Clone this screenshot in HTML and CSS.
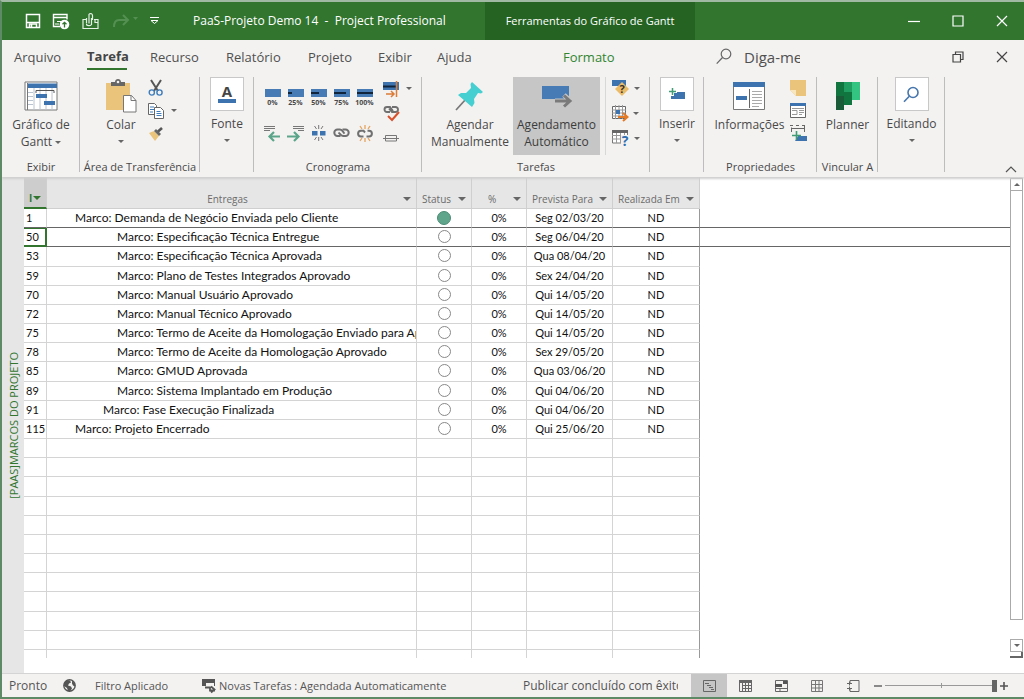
FILE: index.html
```html
<!DOCTYPE html>
<html lang="pt-BR">
<head>
<meta charset="utf-8">
<title>PaaS-Projeto Demo 14 - Project Professional</title>
<meta name="viewport" content="width=device-width, initial-scale=1">
<link rel="stylesheet" href="styles.css">
</head>
<body>
<div class="window">
<header class="titlebar">
  <div class="quick">
    <button aria-label="Salvar"><svg width="16" height="16" viewBox="0 0 16 16" fill="none" stroke="#fff" stroke-width="1.5"><path d="M1.5 1.5h13v13h-13zM1.5 9.5h13"/><path d="M4.5 14.500v-3.500h7v3.500M6.500 11v3" /></svg></button>
    <button aria-label="Publicar"><svg width="17" height="17" viewBox="0 0 17 17" fill="none" stroke="#fff"><path d="M7 13.500H.5V1.500h13.500v5M1 4.500h13" stroke-width="1.400"/><path d="M4 8.500h4M2 11h4"/><circle cx="11.500" cy="11.500" r="4.800" fill="#fff" stroke="none"/><path d="M11.500 14.500v-5M9.500 11.300l2-2 2 2" stroke="#31752f" stroke-width="1.300"/></svg></button>
    <button aria-label="Anexar"><svg width="18" height="17" viewBox="0 0 18 17" fill="none" stroke="#e5f1e4" stroke-width="1.200"><path d="M4 6.500H1v9h15v-9h-4M13 6.500v3h3"/><path d="M4.500 5v5.500M7 1v9.500M9.500 5v7M4.500 11c0 2 4.500 2.500 5 0M7 1c2-1 3.500 0 3.500 1.500V7"/></svg></button>
    <button class="faded" aria-label="Refazer"><svg width="26" height="14" viewBox="0 0 26 14" fill="none" stroke="#549051" stroke-width="2"><path d="M2 13c0-4 1-7 5-7h8M11 1l5 5-5 5"/><path d="M21 3h5l-2.500 3z" fill="#549051" stroke="none"/></svg></button>
    <button aria-label="Personalizar"><svg width="9" height="8" viewBox="0 0 9 8" fill="none" stroke="#fff"><path d="M0 .5h9M1 3.500l3.500 3 3.500-3z"/></svg></button>
  </div>
  <h1>PaaS-Projeto Demo 14&nbsp; -&nbsp; Project Professional</h1>
  <div class="context">Ferramentas do Gráfico de Gantt</div>
  <div class="controls">
    <button aria-label="Minimizar"><svg width="12" height="12" viewBox="0 0 12 12"><path d="M0 6.500h12" stroke="#fff" stroke-width="1.200"/></svg></button>
    <button aria-label="Maximizar"><svg width="12" height="12" viewBox="0 0 12 12"><path d="M1 1h10v10H1z" stroke="#fff" stroke-width="1.200" fill="none"/></svg></button>
    <button aria-label="Fechar"><svg width="12" height="12" viewBox="0 0 12 12"><path d="M1 1l10 10M11 1L1 11" stroke="#fff" stroke-width="1.200"/></svg></button>
  </div>
</header>

<nav class="tabs">
  <a href="#" class="tab-file">Arquivo</a>
  <a href="#" class="tab-task active">Tarefa</a>
  <a href="#" class="tab-resource">Recurso</a>
  <a href="#" class="tab-report">Relatório</a>
  <a href="#" class="tab-project">Projeto</a>
  <a href="#" class="tab-view">Exibir</a>
  <a href="#" class="tab-help">Ajuda</a>
  <a href="#" class="tab-format">Formato</a>
  <label class="tellme"><svg width="16" height="17" viewBox="0 0 16 17" fill="none" stroke="#666" stroke-width="1.200"><circle cx="10" cy="6" r="4.800"/><path d="M6.500 9.500L.7 15.700"/></svg><span>Diga-me</span></label>
  <div class="controls dark">
    <button aria-label="Restaurar"><svg width="12" height="12" viewBox="0 0 12 12" fill="none" stroke="#444" stroke-width="1.200"><path d="M1 3.500h7.500V11H1zM3.500 3.500V1H11v7.500H8.500"/></svg></button>
    <button aria-label="Fechar projeto"><svg width="12" height="12" viewBox="0 0 12 12"><path d="M1 1l10 10M11 1L1 11" stroke="#444" stroke-width="1.200"/></svg></button>
  </div>
</nav>

<section class="ribbon">
  <div class="group g-view">
    <div class="tools"><button class="big"><span class="ico"><svg width="34" height="30" viewBox="0 0 34 30"><path d="M1 1h32v28H1z" fill="#fff" stroke="#777"/><path d="M3 2.500h30V7H3z" fill="#3d73ae"/><path d="M4 11.500h5M4 15.500h5M4 19.500h5M4 23.500h5M10 7v22M16 7v22M22 7v22M28 7v22" stroke="#b9c4d0"/><path d="M3.500 2v27" stroke="#777"/><path d="M12 12v-2.500h18V12" fill="none" stroke="#555"/><path d="M12 13h11v4H12zM20 20h11v4H20z" fill="#3d73ae"/></svg></span><span>Gráfico de<br>Gantt <i class="caret"></i></span></button></div>
    <h2>Exibir</h2>
  </div>
  <div class="group g-clip">
    <div class="tools">
      <button class="big"><span class="ico"><svg width="32" height="34" viewBox="0 0 32 34"><path d="M1 4h24v27H1z" fill="#ebc47c"/><path d="M6 3h4c0-4 6-4 6 0h4v4H6z" fill="#666"/><circle cx="13" cy="3" r="1.300" fill="#f3f2f1"/><path d="M18.500 16.500h8l4.500 5v11.500H18.500z" fill="#fff" stroke="#777"/><path d="M26 16.500v5h5" fill="none" stroke="#777"/></svg></span><span>Colar</span><i class="caret"></i></button>
      <div class="stack">
        <button aria-label="Recortar"><svg width="16" height="16" viewBox="0 0 16 16" fill="none"><path d="M3 0l7 11M13 0L6 11" stroke="#555" stroke-width="2"/><circle cx="3.800" cy="12.500" r="2.600" stroke="#3f7dbb" stroke-width="1.400"/><circle cx="11.500" cy="12.500" r="2.600" stroke="#3f7dbb" stroke-width="1.400"/></svg></button>
        <button aria-label="Copiar"><svg width="16" height="16" viewBox="0 0 16 16" fill="#fff" stroke="#666"><path d="M.5.5h6l2 2v9h-8z"/><path d="M2 4h4M2 6.500h4M2 9h3" stroke="#3f7dbb"/><path d="M6.500 4.500h6l3 3v8h-9z"/><path d="M8.500 8.500h4M8.500 10.500h5M8.500 12.500h5" stroke="#3f7dbb"/></svg><i class="caret"></i></button>
        <button aria-label="Pincel de Formatação"><svg width="16" height="14" viewBox="0 0 16 14"><path d="M1 6l5-2 5 5-4 5z" fill="#ebc47c"/><path d="M6 4l2-2 5 5-2 2z" fill="#666"/><path d="M10 4.500L14 1" stroke="#555" stroke-width="2.600"/></svg></button>
      </div>
    </div>
    <h2>Área de Transferência</h2>
  </div>
  <div class="group g-font">
    <div class="tools"><button class="big boxed"><span class="box"><svg width="18" height="22" viewBox="0 0 18 22"><text x="9" y="14" text-anchor="middle" class="glyph-a">A</text><path d="M0 16h18v4H0z" fill="#3d73ae"/></svg></span><span>Fonte</span><i class="caret"></i></button></div>
  </div>
  <div class="group g-sched">
    <div class="tools">
      <div class="progress-grid">
        <button><i class="bar"><i class="p0"></i></i>0%</button>
        <button><i class="bar"><i class="p25"></i></i>25%</button>
        <button><i class="bar"><i class="p50"></i></i>50%</button>
        <button><i class="bar"><i class="p75"></i></i>75%</button>
        <button><i class="bar"><i class="p100"></i></i>100%</button>
        <button aria-label="Recuar"><svg width="17" height="17" viewBox="0 0 17 17" fill="none"><path d="M0 1.500h11M0 3.500h11M0 5.500h6" stroke="#777"/><path d="M16 11.500H6M10 7l-4.500 4.500L10 16" stroke="#5ba58a" stroke-width="2.200"/></svg></button>
        <button aria-label="Avançar"><svg width="17" height="17" viewBox="0 0 17 17" fill="none"><path d="M6 1.500h11M6 3.500h11M11 5.500h6" stroke="#777"/><path d="M0 11.500h11M7 7l4.500 4.500L7 16" stroke="#5ba58a" stroke-width="2.200"/></svg></button>
        <button aria-label="Dividir Tarefa"><svg width="16" height="16" viewBox="0 0 16 16"><path d="M1 6h5.500v4.500H1zM9 6h5.500v4.500H9z" fill="#3d73ae"/><path d="M7.700 0v4M7.700 12v4M3.500 1l2 3M12 1l-2 3M3.500 15l2-3M12 15l-2-3" stroke="#777"/></svg></button>
        <button aria-label="Vincular"><svg width="17" height="12" viewBox="0 0 17 12" fill="none" stroke="#707070" stroke-width="2"><path d="M7.500 9H4.500a3.200 3.200 0 0 1 0-6.400H7c2.500 0 3 2.500 4.500 4"/><path d="M9.500 2.600h3a3.200 3.200 0 0 1 0 6.400H10C7.500 9 7 6.500 5.500 5.500"/></svg></button>
        <button aria-label="Desvincular"><svg width="16" height="17" viewBox="0 0 16 17" fill="none"><path d="M6.500 11.500H4a2.900 2.900 0 0 1 0-5.800h2.500L8 7.500M9.500 11.500H12a2.900 2.900 0 0 0 0-5.800h-1.500" stroke="#707070" stroke-width="2"/><path d="M8 0v4M8 13v4M3 1l2 3M13 1l-2 3M3 16l2-3M13 16l-2-3" stroke="#e5a45c" stroke-width="1.300"/></svg></button>
      </div>
      <div class="stack">
        <button aria-label="Atualizar"><svg width="16" height="16" viewBox="0 0 16 16" fill="none"><path d="M0 1h16v8H0z" fill="#3d73ae"/><path d="M0 5.500h13" stroke="#10243b" stroke-width="2"/><path d="M13.500 0v16M3 13h8M8 10l3 3-3 3" stroke="#dc7b35" stroke-width="1.500"/></svg><i class="caret"></i></button>
        <button aria-label="Respeitar Vínculos"><svg width="17" height="17" viewBox="0 0 17 17" fill="none"><path d="M7 7H4a2.500 2.500 0 0 1 0-5h3l3 4M9 2h3.500a2.500 2.500 0 0 1 0 5H9L6 3.500" stroke="#707070" stroke-width="1.900"/><path d="M5 11l4 4 7-8" stroke="#d9512c" stroke-width="2"/></svg></button>
        <button aria-label="Inativar"><svg width="16" height="7" viewBox="0 0 16 7" fill="none" stroke="#777"><path d="M2.500.5h11v5.500h-11zM0 3.500h16"/></svg></button>
      </div>
    </div>
    <h2>Cronograma</h2>
  </div>
  <div class="group g-tasks">
    <div class="tools">
      <button class="big manual"><span class="ico"><svg width="30" height="30" viewBox="0 0 30 30"><path d="M1 29l10-11" stroke="#777" stroke-width="1.700"/><path d="M17 1l11 10-2 1.500-3-.5-4 6 .5 4-2.500 4L3 14l3-2h5l5-5-.5-4z" fill="#45cfd0"/></svg></span><span>Agendar<br>Manualmente</span></button>
      <button class="big auto" aria-pressed="true"><span class="ico"><svg width="32" height="26" viewBox="0 0 32 26"><path d="M1 3h27v13H1z" fill="#477bb5"/><path d="M14 18h15M23 12l6.500 6L23 24" fill="none" stroke="#c6c6c6" stroke-width="5"/><path d="M14 18h15M23 12.500l6 5.500-6 5.500" fill="none" stroke="#7a7a7a" stroke-width="3"/></svg></span><span>Agendamento<br>Automático</span></button>
      <div class="stack divided">
        <button aria-label="Inspecionar"><svg width="18" height="17" viewBox="0 0 18 17"><path d="M0 0h14v6H0z" fill="#3d73ae"/><path d="M10 2l7 7-7 7-7-7z" fill="#ebbc67"/><text x="10" y="13" text-anchor="middle" class="q">?</text></svg><i class="caret"></i></button>
        <button aria-label="Mover"><svg width="17" height="17" viewBox="0 0 17 17" fill="none"><path d="M.5 1.500h13v12H.5z" fill="#fff" stroke="#666"/><path d="M3.500 0v14M7 0v14M10.500 0v14M0 5h14M0 8h14M0 11h14" stroke="#999"/><path d="M4 5h4v4H4z" fill="#3d73ae"/><path d="M6 12h9M11 8l4.500 4-4.500 4" stroke="#e47a25" stroke-width="2"/></svg><i class="caret"></i></button>
        <button aria-label="Modo"><svg width="18" height="17" viewBox="0 0 18 17"><path d="M.5 1h15v12H.5z" fill="#fff" stroke="#777"/><path d="M4.500 1v12M8.500 1v12M12.500 1v12M0 5.500h15M0 9h15" stroke="#999"/><path d="M0 0h16v3H0z" fill="#666"/><path d="M9 5h8v12H9z" fill="#f3f2f1"/><text x="13" y="16" text-anchor="middle" class="q blue">?</text></svg><i class="caret"></i></button>
      </div>
    </div>
    <h2>Tarefas</h2>
  </div>
  <div class="group g-insert">
    <div class="tools"><button class="big boxed"><span class="box"><svg width="18" height="14" viewBox="0 0 18 14"><path d="M3 5h14v7H3z" fill="#3d73ae"/><path d="M4.500 0v9M0 4.500h9" stroke="#fff" stroke-width="3"/><path d="M4.500 1v7M1 4.500h7" stroke="#3f9c74" stroke-width="1.500"/></svg></span><span>Inserir</span><i class="caret"></i></button></div>
  </div>
  <div class="group g-props">
    <div class="tools">
      <button class="big"><span class="ico"><svg width="32" height="28" viewBox="0 0 32 28"><path d="M.5.5h31v27H.5z" fill="#fff" stroke="#777"/><path d="M0 0h32v5H0z" fill="#3d73ae"/><path d="M3 14h11v4H3z" fill="#3d73ae"/><path d="M16.500 7v19" stroke="#666"/><path d="M19 9.500h10M19 12.500h10M19 15.500h10M19 18.500h10M19 21.500h10M19 24.500h7" stroke="#aaa"/></svg></span><span>Informações</span></button>
      <div class="stack">
        <button aria-label="Anotações"><svg width="16" height="16" viewBox="0 0 16 16"><path d="M0 0h16v16H6L0 10z" fill="#ebc47c"/><path d="M0 10h6v6z" fill="#f8e6bf"/></svg></button>
        <button aria-label="Detalhes"><svg width="16" height="15" viewBox="0 0 16 15"><path d="M.5.5h15v14H.5z" fill="#fff" stroke="#666"/><path d="M0 0h16v3H0z" fill="#3d73ae"/><path d="M2 5.500h12M2 7.500h5v4H2M9 7.500h5M9 9.500h5M9 11.500h3" fill="none" stroke="#999"/></svg></button>
        <button aria-label="Adicionar à Linha do Tempo"><svg width="17" height="17" viewBox="0 0 17 17" fill="none"><path d="M0 .5h3M6 .5h3M12 .5h3M1.500 7V2.500M1.500 3.500h13M14.500 1v6" stroke="#666"/><path d="M8 11h9v5H5z" fill="#3d73ae"/><path d="M6.500 6v9M2 10.500h9" stroke="#3f9c74" stroke-width="1.600"/></svg></button>
      </div>
    </div>
    <h2>Propriedades</h2>
  </div>
  <div class="group g-planner">
    <div class="tools"><button class="big"><span class="ico"><svg width="24" height="28" viewBox="0 0 24 28"><path d="M0 0h16v23H8v5H0z" fill="#10753e"/><path d="M8 0h8v10H8z" fill="#209d61"/><path d="M16 0h8v18h-8z" fill="#33c481"/><path d="M0 14h8v14H0z" fill="#1b5c38"/></svg></span><span>Planner</span></button></div>
    <h2>Vincular A</h2>
  </div>
  <div class="group g-edit">
    <div class="tools"><button class="big boxed"><span class="box"><svg width="17" height="17" viewBox="0 0 17 17" fill="none" stroke="#4676ac" stroke-width="1.600"><circle cx="10" cy="6.500" r="5"/><path d="M6.300 10.300L1 15.700"/></svg></span><span>Editando</span><i class="caret"></i></button></div>
  </div>
  <button class="collapse" aria-label="Recolher faixa de opções"><svg width="12" height="7" viewBox="0 0 12 7"><path d="M1 6l5-5 5 5" fill="none" stroke="#555" stroke-width="1.200"/></svg></button>
</section>

<main class="work">
  <aside class="viewname"><span>[PAAS]MARCOS DO PROJETO</span></aside>
  <div class="sheet">
  <table>
    <colgroup><col class="c-id"><col class="c-name"><col class="c-status"><col class="c-pct"><col class="c-due"><col class="c-done"><col></colgroup>
    <thead><tr><th class="id"><div>I<i class="caret"></i></div></th><th><div>Entregas<i class="caret"></i></div></th><th><div>Status<i class="caret"></i></div></th><th><div>%<i class="caret"></i></div></th><th><div>Prevista Para<i class="caret"></i></div></th><th><div>Realizada Em<i class="caret"></i></div></th><td class="chart"></td></tr></thead>
    <tbody>
      <tr class="before"><td>1</td><td class="l1">Marco: Demanda de Negócio Enviada pelo Cliente</td><td><i class="dot on"></i></td><td>0%</td><td>Seg 02/03/20</td><td>ND</td><td class="chart"></td></tr>
      <tr class="selected"><td>50</td><td class="l3">Marco: Especificação Técnica Entregue</td><td><i class="dot"></i></td><td>0%</td><td>Seg 06/04/20</td><td>ND</td><td class="chart"></td></tr>
      <tr><td>53</td><td class="l3">Marco: Especificação Técnica Aprovada</td><td><i class="dot"></i></td><td>0%</td><td>Qua 08/04/20</td><td>ND</td><td class="chart"></td></tr>
      <tr><td>59</td><td class="l3">Marco: Plano de Testes Integrados Aprovado</td><td><i class="dot"></i></td><td>0%</td><td>Sex 24/04/20</td><td>ND</td><td class="chart"></td></tr>
      <tr><td>70</td><td class="l3">Marco: Manual Usuário Aprovado</td><td><i class="dot"></i></td><td>0%</td><td>Qui 14/05/20</td><td>ND</td><td class="chart"></td></tr>
      <tr><td>72</td><td class="l3">Marco: Manual Técnico Aprovado</td><td><i class="dot"></i></td><td>0%</td><td>Qui 14/05/20</td><td>ND</td><td class="chart"></td></tr>
      <tr><td>75</td><td class="l3">Marco: Termo de Aceite da Homologação Enviado para Aprovação</td><td><i class="dot"></i></td><td>0%</td><td>Qui 14/05/20</td><td>ND</td><td class="chart"></td></tr>
      <tr><td>78</td><td class="l3">Marco: Termo de Aceite da Homologação Aprovado</td><td><i class="dot"></i></td><td>0%</td><td>Sex 29/05/20</td><td>ND</td><td class="chart"></td></tr>
      <tr><td>85</td><td class="l3">Marco: GMUD Aprovada</td><td><i class="dot"></i></td><td>0%</td><td>Qua 03/06/20</td><td>ND</td><td class="chart"></td></tr>
      <tr><td>89</td><td class="l3">Marco: Sistema Implantado em Produção</td><td><i class="dot"></i></td><td>0%</td><td>Qui 04/06/20</td><td>ND</td><td class="chart"></td></tr>
      <tr><td>91</td><td class="l2">Marco: Fase Execução Finalizada</td><td><i class="dot"></i></td><td>0%</td><td>Qui 04/06/20</td><td>ND</td><td class="chart"></td></tr>
      <tr><td>115</td><td class="l1">Marco: Projeto Encerrado</td><td><i class="dot"></i></td><td>0%</td><td>Qui 25/06/20</td><td>ND</td><td class="chart"></td></tr>
      <tr><td>&nbsp;</td><td></td><td></td><td></td><td></td><td></td><td class="chart"></td></tr>
      <tr><td>&nbsp;</td><td></td><td></td><td></td><td></td><td></td><td class="chart"></td></tr>
      <tr><td>&nbsp;</td><td></td><td></td><td></td><td></td><td></td><td class="chart"></td></tr>
      <tr><td>&nbsp;</td><td></td><td></td><td></td><td></td><td></td><td class="chart"></td></tr>
      <tr><td>&nbsp;</td><td></td><td></td><td></td><td></td><td></td><td class="chart"></td></tr>
      <tr><td>&nbsp;</td><td></td><td></td><td></td><td></td><td></td><td class="chart"></td></tr>
      <tr><td>&nbsp;</td><td></td><td></td><td></td><td></td><td></td><td class="chart"></td></tr>
      <tr><td>&nbsp;</td><td></td><td></td><td></td><td></td><td></td><td class="chart"></td></tr>
      <tr><td>&nbsp;</td><td></td><td></td><td></td><td></td><td></td><td class="chart"></td></tr>
      <tr><td>&nbsp;</td><td></td><td></td><td></td><td></td><td></td><td class="chart"></td></tr>
      <tr><td>&nbsp;</td><td></td><td></td><td></td><td></td><td></td><td class="chart"></td></tr>
      <tr class="cut"><td></td><td></td><td></td><td></td><td></td><td></td><td class="chart"></td></tr>
    </tbody>
  </table>
  </div>
  <div class="scroll">
    <button aria-label="Rolar para cima"><i class="caret up"></i></button>
    <div class="thumb"></div>
    <button aria-label="Rolar para baixo"><i class="caret"></i></button>
    <div class="grip"></div>
  </div>
</main>

<footer class="status">
  <span class="ready">Pronto</span>
  <svg class="globe" width="13" height="13" viewBox="0 0 13 13"><circle cx="6.500" cy="6.500" r="5.700" fill="#f3f2f1" stroke="#555" stroke-width="1.400"/><path d="M1 4l3-3 3 .5 1 2-2 1-1 2 3 1 1 2-2 3-2-.5-1-3-3-2zM9 1.500l3 3v3l-2-1-1-2z" fill="#555"/></svg>
  <span class="filter">Filtro Aplicado</span>
  <svg class="newtask" width="14" height="14" viewBox="0 0 14 14" fill="none"><path d="M0 0h13v7H0z" fill="#555"/><path d="M4 5.500h8M4 10h8M9 6.500l4 3.500-4 3.500" stroke="#f3f2f1" stroke-width="3"/><path d="M3 8.500h5v3h5M9 7.500l3.500 3L9 13.500" stroke="#555" stroke-width="1.800"/></svg>
  <span class="mode">Novas Tarefas : Agendada Automaticamente</span>
  <span class="publish">Publicar concluído com êxito</span>
  <div class="views">
    <button class="current" aria-label="Gráfico de Gantt"><svg width="13" height="12" viewBox="0 0 13 12" fill="none" stroke="#666"><path d="M.5.5h12v11H.5zM2 3.500h4M4 5.500h4M6 7.500h4M8 9.500h3"/></svg></button>
    <button aria-label="Uso da Tarefa"><svg width="13" height="12" viewBox="0 0 13 12" fill="none" stroke="#666"><path d="M.5.500h12v11H.5zM3.500 3v8M6.500 3v8M9.500 3v8M3 5.500h9M3 8.500h9"/><path d="M0 0h13v3H0z" fill="#666" stroke="none"/></svg></button>
    <button aria-label="Planejador de Equipe"><svg width="13" height="12" viewBox="0 0 13 12" fill="none" stroke="#666"><path d="M.5.500h12v11H.5zM0 8.500h13M5 8.500v3"/><path d="M0 4h7v3H0zM8 1h4v3H8z" fill="#555" stroke="none"/></svg></button>
    <button aria-label="Planilha de Recursos"><svg width="12" height="12" viewBox="0 0 12 12" fill="none" stroke="#777"><path d="M.5.500h11v11H.5zM4.500 0v12M8 0v12M0 4.500h12M0 8h12"/></svg></button>
    <button aria-label="Relatório"><svg width="13" height="12" viewBox="0 0 13 12" fill="none" stroke="#666"><path d="M3 3V.5h9v11H3V8.500M0 3.500h5M0 8.500h5M2.500 1.500v4M2.500 6.500v4"/></svg></button>
  </div>
  <div class="zoom"><button aria-label="Reduzir"><svg width="8" height="8" viewBox="0 0 8 8"><path d="M0 4h8" stroke="#666" stroke-width="1.500"/></svg></button><input type="range" aria-label="Zoom" min="0" max="100" value="100"><button aria-label="Ampliar"><svg width="8" height="8" viewBox="0 0 8 8"><path d="M0 4h8M4 0v8" stroke="#555" stroke-width="1.600"/></svg></button></div>
</footer>
</div>
</body>
</html>
```
FILE: styles.css
```css
* { box-sizing: border-box; }
body { margin: 0; font-family: "Open Sans", "Noto Sans", sans-serif; font-size: 13px; color: #494949; }
button { font: inherit; color: inherit; border: 0; padding: 0; margin: 0; background: none; }
svg { display: block; flex: none; overflow: visible; }
a { color: inherit; text-decoration: none; }
h1, h2 { margin: 0; font-weight: 400; }

.window { display: flex; flex-direction: column; min-height: 100vh; border: solid #5e8a66; border-width: 2px 0 2px 2px; border-top-color: #9fb9a2; background: #f3f2f1; overflow: hidden; }

.titlebar { display: flex; align-items: stretch; height: 38px; background: #31752f; color: #fff; }
.quick { display: flex; align-items: center; gap: 12px; width: 191px; padding-left: 23px; }
.titlebar h1 { flex: none; width: 292px; font-size: 12px; line-height: 38px; white-space: nowrap; }
.context { width: 210px; background: #246322; text-align: center; font-size: 11px; line-height: 38px; white-space: nowrap; }
.controls { display: flex; align-items: center; margin-left: auto; }
.controls button { display: flex; justify-content: center; width: 44px; }

.tabs { display: flex; align-items: center; height: 35px; padding-bottom: 2px; color: #505050; white-space: nowrap; font-size: 13px; }
.tabs a { line-height: 24px; }
.tab-file { width: 73px; padding-left: 12px; }
.tab-task { margin-left: 12px; width: 40px; font-weight: 700; color: #444; }
.tab-task.active { border-bottom: 2px solid #31752f; }
.tab-resource { width: 76px; margin-left: 23px; }
.tab-report { width: 82px; }
.tab-project { width: 70px; }
.tab-view { width: 59px; }
.tab-help { width: 126px; }
.tabs .tab-format { width: 153px; color: #31852f; }
.tellme { display: flex; align-items: center; gap: 12px; font-size: 15px; line-height: 20px; }
.tellme span { width: 56px; overflow: hidden; }

.ribbon { display: flex; height: 102px; padding-top: 2px; line-height: 17px; box-shadow: 0 2px 2px #cfcfcf; position: relative; }
.group { display: flex; flex-direction: column; background: linear-gradient(#bdbdbd, #bdbdbd) right top / 1px 95px no-repeat; }
.group h2 { font-size: 11px; line-height: 18px; text-align: center; white-space: nowrap; }
.tools { display: flex; height: 81px; justify-content: center; }
.g-view { width: 78px; }
.g-clip { width: 120px; }
.g-font { width: 54px; }
.g-sched { width: 168px; }
.g-tasks { width: 228px; }
.g-insert { width: 54px; }
.g-props { width: 113px; }
.g-planner { width: 61px; }
.g-edit { width: 67px; }
.big { display: flex; flex-direction: column; align-items: center; padding-top: 3px; font-size: 12px; white-space: nowrap; }
.ico { display: flex; align-items: center; justify-content: center; height: 32px; margin-bottom: 4px; }
.big > .caret { margin-top: 7px; }
.boxed { padding-top: 0; }
.box { display: flex; align-items: center; justify-content: center; width: 34px; height: 34px; margin-bottom: 4px; background: #fff; border: 1px solid #c8c8c8; }
.glyph-a { font: 700 15px "Open Sans", sans-serif; fill: #444; }
.caret { display: inline-block; border: solid transparent; border-width: 3px 3px 0; border-top-color: #666; vertical-align: middle; }
.caret.up { border-width: 0 3px 3px; border-bottom-color: #666; }
.stack { display: flex; flex-direction: column; gap: 7px; padding-top: 3px; }
.stack button { display: flex; align-items: center; gap: 7px; min-height: 17px; }
.g-clip .big { width: 58px; }
.g-clip .stack { width: 38px; gap: 6px; padding-top: 2px; }
.g-clip .tools { justify-content: start; padding-left: 12px; gap: 0; }
.g-clip .stack { margin-left: -2px; }
.progress-grid { display: grid; grid-template-columns: repeat(5, 23px); grid-template-rows: 30px 30px; row-gap: 2px; align-content: start; padding-top: 9px; }
.progress-grid button { display: flex; flex-direction: column; align-items: center; font: 700 7px/9px "Open Sans", sans-serif; justify-content: start; }
.progress-grid button:nth-child(n+6) { justify-content: center; }
.bar { display: block; width: 16px; height: 8px; padding-top: 3px; background: #477bb5; margin: 3px 0 1px; }
.bar i { display: block; height: 2px; background: #10243b; }
.p0 { width: 0; } .p25 { width: 25%; } .p50 { width: 50%; } .p75 { width: 75%; } .p100 { width: 100%; }
.g-sched .tools { justify-content: start; padding-left: 7px; }
.g-sched .stack { width: 34px; margin-left: 7px; gap: 8px; }
.g-tasks .tools { justify-content: start; }
.g-tasks .big { height: 78px; }
.manual { width: 91px; padding-left: 5px; }
.auto { width: 87px; background: #c6c6c6; color: #3c3c3c; }
.stack.divided { margin-left: 5px; padding-left: 6px; border-left: 1px solid #d8d8d8; gap: 8px; height: 78px; }
.stack.divided button { gap: 4px; }
.q { font: 700 11px "Open Sans", sans-serif; fill: #333; }
.q.blue { font-size: 14px; fill: #2e6fb0; }
.g-props .tools { gap: 5px; }
.g-props .stack { padding-top: 2px; gap: 6px; }
.collapse { align-self: flex-end; margin: 0 7px 4px auto; }

.work { display: flex; flex: 1; background: #fff; }
.viewname { display: flex; justify-content: center; align-items: center; width: 22px; background: #e6e6e6; color: #31752f; font-size: 11px; }
.viewname span { writing-mode: vertical-rl; transform: rotate(180deg); white-space: nowrap; }
.sheet { flex: 1; display: flex; padding-bottom: 15px; min-width: 0; }
.sheet table { width: 100%; table-layout: fixed; border-spacing: 0; font: 12px/14px Lato, "Open Sans", sans-serif; color: #111; }
.c-id { width: 23px; } .c-name { width: 370px; } .c-status, .c-pct { width: 55px; } .c-due { width: 86px; } .c-done { width: 87px; }
th { height: 32px; padding: 0 0 2px; vertical-align: bottom; background: #e6e6e6; border-right: 1px solid #cfcfcf; border-bottom: 1px solid #cfcfcf; font: 10px/14px "Open Sans", sans-serif; color: #6b6b6b; }
th div { display: flex; align-items: center; justify-content: space-between; padding: 0 5px; white-space: nowrap; }
th .caret { border-width: 4px 4px 0; }
th:nth-child(2) div::before { content: ""; }
th:nth-child(4) div { padding-left: 16px; }
th.id { background: #cdcdcd; color: #31752f; border-bottom: 2px solid #31752f; font-weight: 700; }
th.id .caret { border-top-color: #31752f; }
tbody td { padding: 0; text-align: center; border-right: 1px solid #d4d4d4; border-bottom: 1px solid #d4d4d4; white-space: nowrap; overflow: hidden; font-size: 11px; }
tbody td:first-child { text-align: left; padding-left: 2px; }
tbody td:nth-child(2) { text-align: left; font-size: 12px; }
tbody td:nth-child(6) { border-right-color: #999; }
tbody td.l1 { padding-left: 28px; } tbody td.l2 { padding-left: 56px; } tbody td.l3 { padding-left: 70px; }
tbody td.chart { border-color: transparent; border-right: 0; }
tbody .before td, tbody .selected td, tbody .before td.chart, tbody .selected td.chart { border-bottom-color: #666; }
tbody .selected td:first-child { border-color: #31752f; box-shadow: inset -1px -1px #31752f, inset 0 1px #31752f; }
.cut td { height: 8px; border-bottom: 0; }
.dot { display: block; width: 13px; height: 13px; margin: 0 auto 1px; border: 1px solid #888; border-radius: 50%; background: #fff; }
.dot.on { width: 14px; height: 14px; margin-bottom: 0; background: #5fa58c; border-color: #4a8b74; }

.scroll { display: flex; flex-direction: column; width: 14px; padding: 1px 1px 15px 0; }
.scroll button { display: flex; align-items: center; justify-content: center; height: 13px; border: 1px solid #aaa; background: #fff; }
.thumb { flex: 1; border: 1px solid #aaa; border-top: 0; }
.thumb + button { margin-top: 19px; }
.grip { height: 6px; border-bottom: 2px solid #666; border-right: 2px solid #666; }

.status { display: flex; align-items: center; height: 24px; border-top: 1px solid #d4d4d4; font-size: 11px; white-space: nowrap; color: #555; }
.ready { width: 61px; padding-left: 7px; font-size: 12px; }
.filter { width: 107px; margin-left: 19px; }
.newtask { margin-right: 3px; }
.publish { margin-left: auto; width: 155px; overflow: hidden; font-size: 12px; }
.views { display: flex; align-self: stretch; margin-left: 13px; }
.views button { display: flex; align-items: center; justify-content: center; width: 36px; }
.views .current { background: #c6c6c6; }
.zoom { display: flex; align-items: center; width: 153px; padding-left: 3px; gap: 3px; }
.zoom input { appearance: none; flex: none; width: 112px; height: 12px; margin: 0; background: linear-gradient(#999, #999) center / 100% 1px no-repeat, linear-gradient(#999, #999) center / 1px 5px no-repeat; }
.zoom input::-webkit-slider-thumb { appearance: none; width: 5px; height: 12px; background: #666; }
```
